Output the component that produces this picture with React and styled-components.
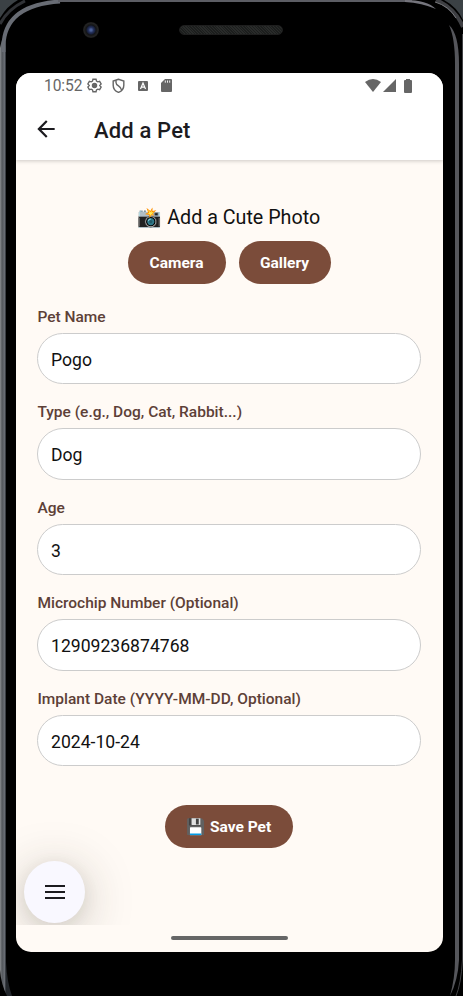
import React from 'react';
import styled, { createGlobalStyle } from 'styled-components';

const Global = createGlobalStyle`
  *{box-sizing:border-box}
  body{margin:0;background:#000;font-family:Roboto,"Noto Color Emoji",sans-serif;overflow:hidden}
`;

const Device = styled.div`
  position:relative;width:463px;height:996px;background:#000;overflow:hidden;
  padding:0 20px 0 16px;display:flex;flex-direction:column;
`;
const Shell = styled.svg`position:absolute;inset:0;pointer-events:none;`;
const TopBezel = styled.div`height:73px;flex:none;display:flex;`;
const Lens = styled.div`
  width:16px;height:16px;border-radius:50%;margin:22px 0 0 67px;
  background:radial-gradient(circle at 50% 50%,#4a5f96 0 1px,#26335f 2.5px,#18203c 4px,#131416 5px,#242424 7px,#171717 8px);
`;
const Speaker = styled.div`
  width:104px;height:10px;border-radius:5px;margin:25px 0 0 80px;border:1px solid #1e1e1e;
  background:repeating-linear-gradient(45deg,#1c1e1d 0 1px,#292b2a 1px 2px);
`;
const Screen = styled.main`
  position:relative;width:427px;height:879px;flex:none;border-radius:15px;overflow:hidden;
  background:#fffaf5;display:flex;flex-direction:column;
`;
const Header = styled.header`
  height:86.5px;flex:none;background:#fff;box-shadow:0 1px 4px rgba(0,0,0,.2);
`;
const StatusBar = styled.div`
  height:26px;display:flex;align-items:center;padding:0 31px 1px 28px;color:#666;
`;
const Clock = styled.span`font-size:15.6px;line-height:26px;width:43px;letter-spacing:-.1px;`;
const StatusIcon = styled.svg`
  display:block;flex:none;width:${p => p.$w}px;height:${p => p.$h || p.$w}px;margin-left:${p => p.$gap || 0}px;
`;
const Spacer = styled.div`flex:1;`;
const TitleBar = styled.div`height:61px;display:flex;align-items:center;padding:0 0 2px 17px;`;
const BackIcon = styled.svg`width:26px;height:26px;display:block;`;
const Title = styled.h1`margin:4px 0 0 35px;font-size:22px;font-weight:500;line-height:28px;color:#1c1b1f;letter-spacing:.15px;`;
const Form = styled.form`padding:44.5px 22px 0 21px;display:flex;flex-direction:column;`;
const PhotoTitle = styled.div`
  height:26px;padding-top:1px;display:flex;align-items:center;justify-content:center;
  font-size:19.7px;color:#111;white-space:pre;
`;
const ButtonRow = styled.div`display:flex;justify-content:center;gap:13px;margin:11px 0 0;`;
const Button = styled.button`
  border:0;border-radius:22px;background:#7b4c3a;color:#fff;font:700 15.5px Roboto,"Noto Color Emoji",sans-serif;
  width:${p => p.$w}px;height:43px;padding:1px 0 0;white-space:pre;display:flex;align-items:center;justify-content:center;
`;
const Fields = styled.div`display:flex;flex-direction:column;margin-top:22.5px;`;
const Field = styled.label`display:block;height:95.5px;`;
const Label = styled.span`
  display:block;height:26px;font-size:15.5px;line-height:20px;font-weight:500;color:#5d4037;white-space:nowrap;
  padding-left:.4px;
`;
const Input = styled.input`
  display:block;width:384px;height:51.5px;border:1px solid #ccc;border-radius:26px;background:#fff;
  padding:3px 14px 0 13px;font:400 17.6px Roboto,sans-serif;color:#111;outline:0;
`;
const SaveRow = styled.div`display:flex;justify-content:center;margin-top:21px;`;
const MenuLayer = styled.div`
  position:absolute;left:0;top:740px;width:128px;height:112px;overflow:hidden;padding:48px 0 0 8px;
`;
const MenuButton = styled.button`
  width:61px;height:62px;border-radius:50%;border:0;padding:0;background:#f9f8ff;
  box-shadow:0 8px 50px rgba(50,45,30,.27),0 4px 16px rgba(50,45,30,.08);
  display:flex;align-items:center;justify-content:center;
`;
const HomeBar = styled.div`
  position:absolute;left:155px;bottom:12px;width:117px;height:4px;border-radius:2px;background:#666;
`;

const FIELDS = [
  ['Pet Name', 'Pogo'],
  ['Type (e.g., Dog, Cat, Rabbit...)', 'Dog'],
  ['Age', '3'],
  ['Microchip Number (Optional)', '12909236874768'],
  ['Implant Date (YYYY-MM-DD, Optional)', '2024-10-24'],
];

export default function App() {
  return (
    <>
      <Global />
      <Device>
        <Shell width="463" height="996" viewBox="0 0 463 996" fill="none">
          <defs>
            <linearGradient id="edge" x1="0" x2="6" y1="0" y2="0" gradientUnits="userSpaceOnUse">
              <stop stopColor="#8a8d90" /><stop offset=".35" stopColor="#53575c" /><stop offset=".75" stopColor="#686c73" /><stop offset="1" stopColor="#22262b" />
            </linearGradient>
          </defs>
          {/* backdrop visible past the rounded body */}
          <path d="M0 0H18Q7 6 0 18Z" fill="#3b4145" />
          <path d="M463 0H444Q457 7 463 20Z" fill="#3b4145" />
          {/* outer chamfer */}
          <path d="M0 24Q8 9 25 1" stroke="#303236" strokeWidth="3" />
          <path d="M436 0Q455 8 463 27" stroke="#3e3f43" strokeWidth="4" />
          <path d="M435 2Q449 6 456 18" stroke="#77787c" strokeWidth="1" />
          {/* metal rim */}
          <path d="M0 52V48Q4 28 6 46V962Q7 982 12 996H7Q1 984 0 970Z" fill="url(#edge)" />
          <path d="M3.500 52V46C4 20 22 4 60 1.500" stroke="#686c74" strokeWidth="4" />
          <path d="M58 1H412" stroke="#5c5d64" strokeWidth="2" />
          <path d="M405 0Q427 0 436 9Q422 3 405 2Z" fill="#75757d" />
          <path d="M449 25Q459 34 459 64V960Q458 980 450 996Q455 978 455 960V64Q455 38 449 25Z" fill="#55565b" />
          <path d="M462.500 34V960Q461 984 456 996" stroke="#404144" strokeWidth="1" />
        </Shell>
        <TopBezel><Lens /><Speaker /></TopBezel>
        <Screen>
          <Header>
            <StatusBar>
              <Clock>10:52</Clock>
              <StatusIcon $w={15} viewBox="0 0 24 24" fill="none" stroke="currentColor" strokeWidth="2.2">
                <path d="M9.500 2h5l.7 3 2 1.200 3-.9 2.400 4.200-2.200 2.500 2.200 2.500-2.400 4.200-3-.9-2 1.200-.7 3h-5l-.7-3-2-1.200-3 .9-2.400-4.200L3.600 12 1.400 9.500l2.400-4.200 3 .9 2-1.200Z" />
                <circle cx="12" cy="12" r="3.300" fill="currentColor" />
              </StatusIcon>
              <StatusIcon $w={15} $gap={9} viewBox="0 0 24 24" fill="none" stroke="currentColor" strokeWidth="2.3">
                <path d="M12 2 3.500 5v6.500C3.500 17 7 21 12 23c5-2 8.500-6 8.500-11.500V5Z" />
                <path d="M8 3.500V7Q8 10 12 12.500T17 19.500" />
              </StatusIcon>
              <StatusIcon $w={10} $gap={12} viewBox="0 0 10 10">
                <rect width="10" height="10" rx="1" fill="currentColor" />
                <path d="m2.500 8 2.500-6 2.500 6M3.500 6.200h3" stroke="#fff" strokeWidth="1.200" fill="none" />
              </StatusIcon>
              <StatusIcon $w={11} $h={13} $gap={13} viewBox="0 0 11 13">
                <path d="M4 0h6q1 0 1 1v11q0 1-1 1H1q-1 0-1-1V4Z" fill="currentColor" />
                <path d="M4.300 1.500v2.200M6.500 1.500v2.200M8.700 1.500v2.200" stroke="#fff" strokeWidth=".9" />
              </StatusIcon>
              <Spacer />
              <StatusIcon $w={16} $h={13} viewBox="0 0 16 13"><path d="M0 3Q8-3 16 3L8 13Z" fill="currentColor" /></StatusIcon>
              <StatusIcon $w={13} $h={13} $gap={2} viewBox="0 0 13 13"><path d="M13 0v13H0Z" fill="currentColor" /></StatusIcon>
              <StatusIcon $w={8} $h={14} $gap={8} viewBox="0 0 8 14"><path d="M2 0h4v1h1q1 0 1 1v11q0 1-1 1H1q-1 0-1-1V2q0-1 1-1h1Z" fill="currentColor" /></StatusIcon>
            </StatusBar>
            <TitleBar>
              <BackIcon viewBox="0 0 24 24"><path d="M20 11H7.830l5.590-5.590L12 4l-8 8 8 8 1.410-1.410L7.830 13H20Z" fill="#1c1b1f" /></BackIcon>
              <Title>Add a Pet</Title>
            </TitleBar>
          </Header>
          <Form>
            <PhotoTitle>📸 Add a Cute Photo</PhotoTitle>
            <ButtonRow>
              <Button type="button" $w={98}>Camera</Button>
              <Button type="button" $w={92}>Gallery</Button>
            </ButtonRow>
            <Fields>
              {FIELDS.map(([label, value]) => (
                <Field key={label}><Label>{label}</Label><Input defaultValue={value} /></Field>
              ))}
            </Fields>
            <SaveRow><Button type="button" $w={128}>💾 Save Pet</Button></SaveRow>
          </Form>
          <MenuLayer>
            <MenuButton type="button" aria-label="Menu">
              <svg width="20" height="14" viewBox="0 0 20 14"><path d="M0 1h20M0 7h20M0 13h20" stroke="#1c1b1f" strokeWidth="2" /></svg>
            </MenuButton>
          </MenuLayer>
          <HomeBar />
        </Screen>
      </Device>
    </>
  );
}
